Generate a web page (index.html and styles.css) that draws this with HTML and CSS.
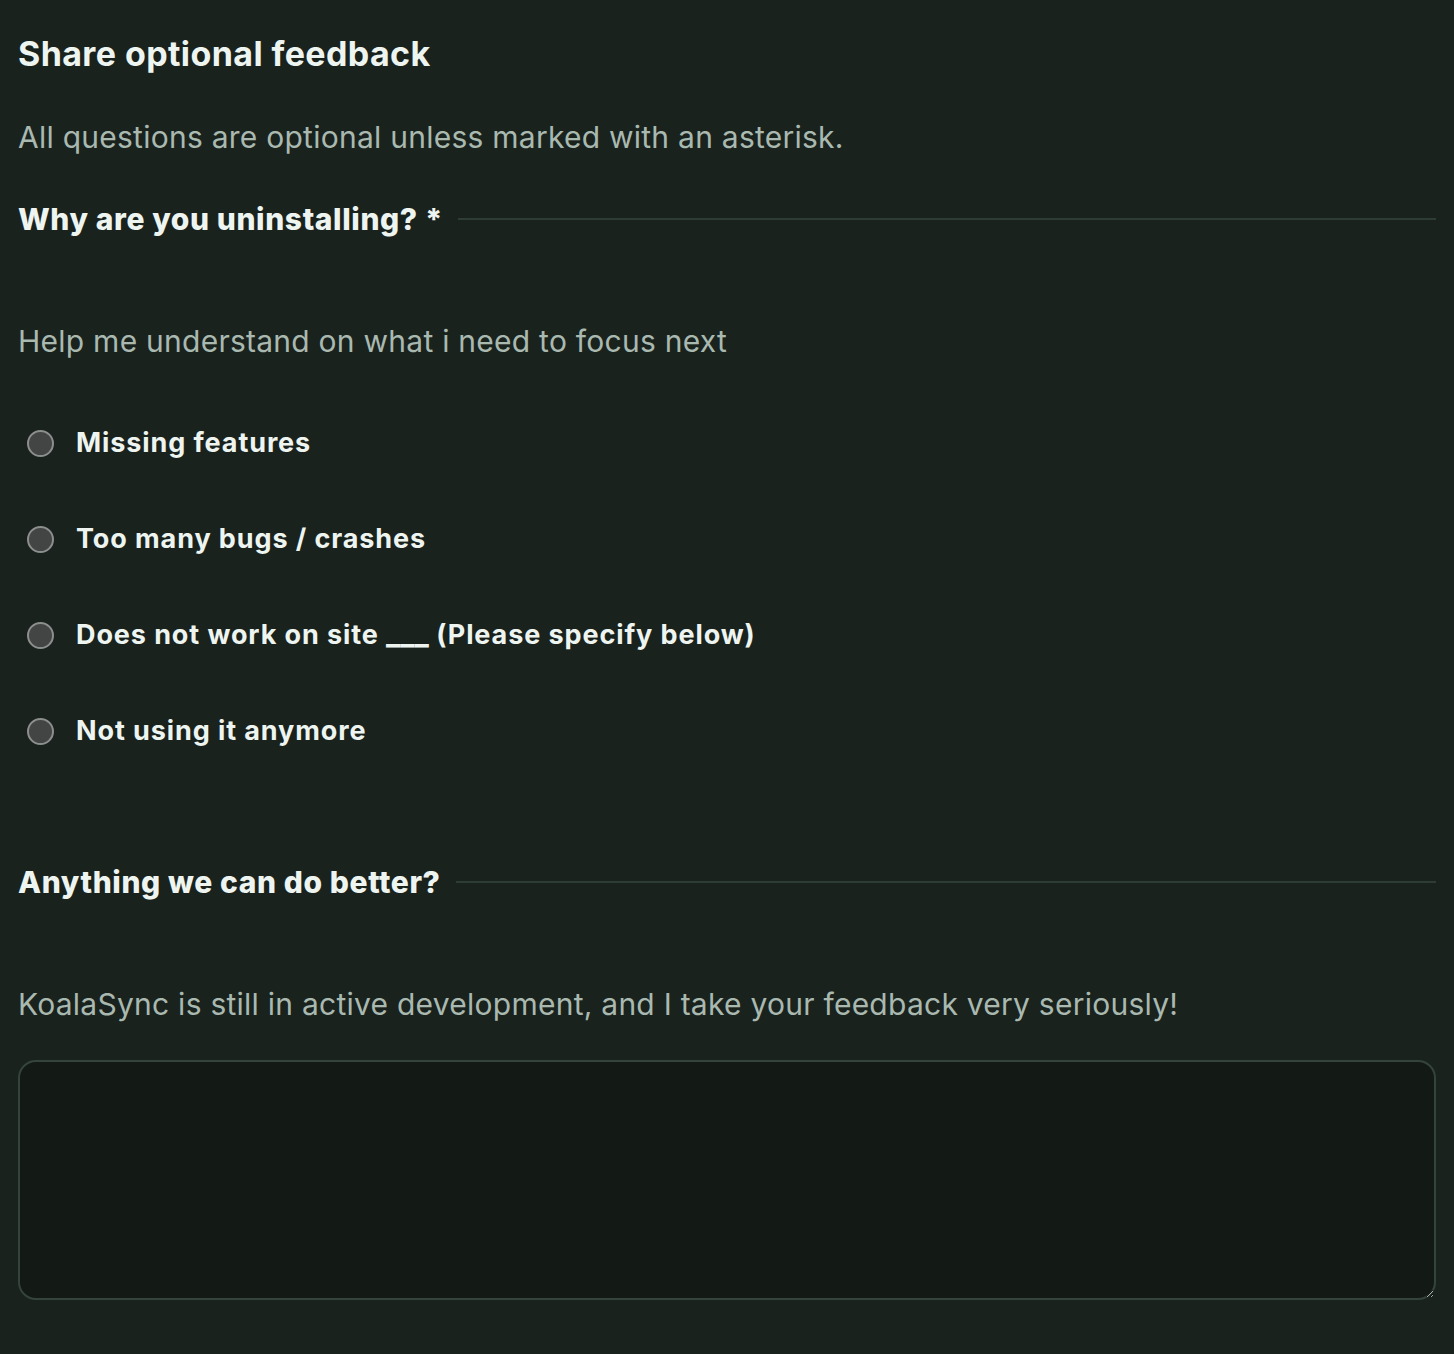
FILE: index.html
```html
<!DOCTYPE html>
<html lang="en">
<head>
<meta charset="utf-8">
<title>Share optional feedback</title>
<link rel="stylesheet" href="styles.css">
</head>
<body>
<main class="page">
  <h1 class="title">Share optional feedback</h1>
  <p class="intro">All questions are optional unless marked with an asterisk.</p>

  <section class="question q-first">
    <h2 class="q-head"><span>Why are you uninstalling? *</span></h2>
    <p class="q-desc">Help me understand on what i need to focus next</p>
    <div class="options">
      <label class="option"><input type="radio" name="reason"><span>Missing features</span></label>
      <label class="option"><input type="radio" name="reason"><span>Too many bugs / crashes</span></label>
      <label class="option"><input type="radio" name="reason"><span>Does not work on site <span class="blank">___</span> (Please specify below)</span></label>
      <label class="option"><input type="radio" name="reason"><span>Not using it anymore</span></label>
    </div>
  </section>

  <section class="question q-second">
    <h2 class="q-head"><span>Anything we can do better?</span></h2>
    <p class="q-desc">KoalaSync is still in active development, and I take your feedback very seriously!</p>
    <textarea class="feedback" aria-label="Feedback"></textarea>
  </section>
</main>
</body>
</html>
```

FILE: styles.css
```css
html, body {
  margin: 0;
  padding: 0;
  background: #1a221e;
}

.page {
  padding: 0 18px;
  font-family: Inter, "Noto Sans", sans-serif;
  color: #eef5f1;
}

.title {
  margin: 0;
  padding-top: 33px;
  font-size: 34px;
  line-height: 42px;
  font-weight: 700;
  letter-spacing: 0.4px;
}

.intro {
  margin: 44px 0 0;
  font-size: 30px;
  line-height: 36px;
  color: #a9b9b0;
  letter-spacing: 0.25px;
}

.q-head {
  display: flex;
  align-items: center;
  gap: 15px;
  margin: 0;
  font-size: 30px;
  line-height: 36px;
  font-weight: 800;
  letter-spacing: 0.6px;
  color: #eef5f1;
}

.q-head::after {
  content: "";
  flex: 1;
  height: 2px;
  background: #2d3c35;
}

.q-first { margin-top: 46px; }
.q-second { margin-top: 115px; }

.q-desc {
  margin: 86px 0 0;
  font-size: 30px;
  line-height: 36px;
  color: #a9b9b0;
  letter-spacing: 0.25px;
}

.options {
  display: flex;
  flex-direction: column;
  gap: 60px;
  margin-top: 66px;
}

.option {
  display: flex;
  align-items: center;
  gap: 22px;
  padding-left: 9px;
  font-size: 27px;
  line-height: 36px;
  font-weight: 700;
  letter-spacing: 0.9px;
}

.option .blank {
  letter-spacing: 0;
  font-size: 30px;
  line-height: 0;
}

.option input {
  appearance: none;
  -webkit-appearance: none;
  margin: 0;
  width: 27px;
  height: 27px;
  border-radius: 50%;
  border: 2px solid #8c8f8d;
  background: #434444;
  box-sizing: border-box;
}

.feedback {
  display: block;
  box-sizing: border-box;
  width: 100%;
  height: 240px;
  margin-top: 38px;
  background: #131915;
  border: 2px solid #34443c;
  border-radius: 18px;
  color: #eef5f1;
  font-family: inherit;
  font-size: 28px;
  resize: vertical;
}
```
